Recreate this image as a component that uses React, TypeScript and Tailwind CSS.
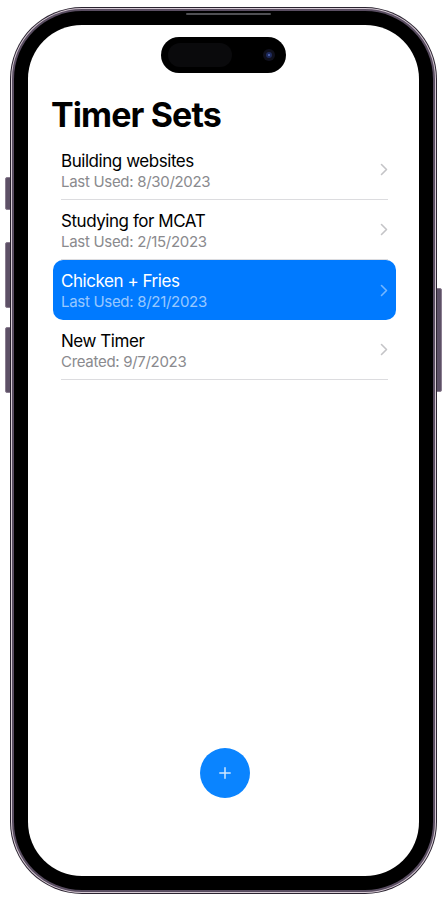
import React from "react";

const rows = [
  { title: "Building websites", sub: "Last Used: 8/30/2023", active: false },
  { title: "Studying for MCAT", sub: "Last Used: 2/15/2023", active: false },
  { title: "Chicken + Fries", sub: "Last Used: 8/21/2023", active: true },
  { title: "New Timer", sub: "Created: 9/7/2023", active: false },
];

function Chevron({ active }: { active: boolean }) {
  return (
    <svg width="8" height="13" viewBox="0 0 8 13" fill="none">
      <path
        d="M1.5 1.5 L6.5 6.5 L1.5 11.5"
        stroke={active ? "rgba(255,255,255,0.45)" : "#c4c4c7"}
        strokeWidth="1.6"
        strokeLinecap="round"
        strokeLinejoin="round"
      />
    </svg>
  );
}

export default function App() {
  return (
    <div
      className="relative w-[447px] h-[901px] bg-white overflow-hidden"
      style={{ fontFamily: "Inter, 'Noto Sans', sans-serif" }}
    >
      {/* side buttons */}
      <div className="absolute left-[5px] top-[177px] w-[6px] h-[33px] rounded-l-[2px] bg-[#5d5066] border border-[#8a7d90]" />
      <div className="absolute left-[5px] top-[242px] w-[6px] h-[66px] rounded-l-[2px] bg-[#5d5066] border border-[#8a7d90]" />
      <div className="absolute left-[5px] top-[327px] w-[6px] h-[66px] rounded-l-[2px] bg-[#5d5066] border border-[#8a7d90]" />
      <div className="absolute left-[436px] top-[288px] w-[6px] h-[104px] rounded-r-[2px] bg-[#5d5066] border border-[#8a7d90]" />

      {/* phone frame */}
      <div className="relative mt-[7px] ml-[10px] w-[427px] h-[887px] rounded-[72px] bg-[#2a2330] p-[1px]">
        <div className="w-full h-full rounded-[71px] bg-[#d6cad4] p-[1px]">
          <div className="w-full h-full rounded-[70px] bg-[#5a4e62] p-[2px]">
            <div className="relative w-full h-full rounded-[68px] bg-black p-[14px]">
              {/* speaker slit */}
              <div className="absolute left-[172px] top-[2px] w-[85px] h-[2px] rounded-full bg-[#505054]" />
              {/* screen */}
              <div className="w-full h-full rounded-[54px] bg-white overflow-hidden flex flex-col">
                {/* dynamic island */}
                <div className="mt-[12px] mx-auto w-[125px] h-[36px] rounded-full bg-black flex items-center pl-[7px] pr-[11px]">
                  <div className="w-[64px] h-[24px] rounded-full bg-[#0a0a0c]" />
                  <div className="ml-auto w-[12px] h-[12px] rounded-full bg-[#10101c] flex items-center justify-center">
                    <div className="w-[6px] h-[6px] rounded-full bg-[#1e2a5c] flex items-center justify-center">
                      <div className="w-[2px] h-[2px] rounded-full bg-[#5a70c0]" />
                    </div>
                  </div>
                </div>

                <h1 className="mt-[21px] ml-[23px] text-[34px] leading-[42px] font-bold text-black tracking-[-0.9px]">
                  Timer Sets
                </h1>

                <div className="mt-[4px] ml-[25px] mr-[23px] flex flex-col">
                  {rows.map((r) => (
                    <div
                      key={r.title}
                      className={
                        r.active
                          ? "px-[8px] rounded-[10px] bg-[#007aff]"
                          : "px-[8px]"
                      }
                    >
                      <div
                        className={
                          r.active
                            ? "h-[60px] flex items-center"
                            : "h-[60px] flex items-center border-b border-[#dcdcdf]"
                        }
                      >
                        <div className="flex-1 flex flex-col pt-[2px]">
                          <div
                            className={
                              r.active
                                ? "text-[17px] leading-[22px] tracking-[-0.45px] text-white"
                                : "text-[17px] leading-[22px] tracking-[-0.45px] text-black"
                            }
                          >
                            {r.title}
                          </div>
                          <div
                            className={
                              r.active
                                ? "text-[15px] leading-[20px] tracking-[-0.3px] text-white/60"
                                : "text-[15px] leading-[20px] tracking-[-0.3px] text-[#8a8a8e]"
                            }
                          >
                            {r.sub}
                          </div>
                        </div>
                        <Chevron active={r.active} />
                      </div>
                    </div>
                  ))}
                </div>

                <div className="flex-1" />

                <div className="mx-auto mb-[78px] w-[50px] h-[50px] rounded-full bg-[#0a84ff] flex items-center justify-center translate-x-[1px]">
                  <svg width="12" height="12" viewBox="0 0 12 12">
                    <path
                      d="M6 0.8 V11.2 M0.8 6 H11.2"
                      stroke="rgba(255,255,255,0.8)"
                      strokeWidth="1.5"
                      strokeLinecap="round"
                    />
                  </svg>
                </div>
              </div>
            </div>
          </div>
        </div>
      </div>
    </div>
  );
}
